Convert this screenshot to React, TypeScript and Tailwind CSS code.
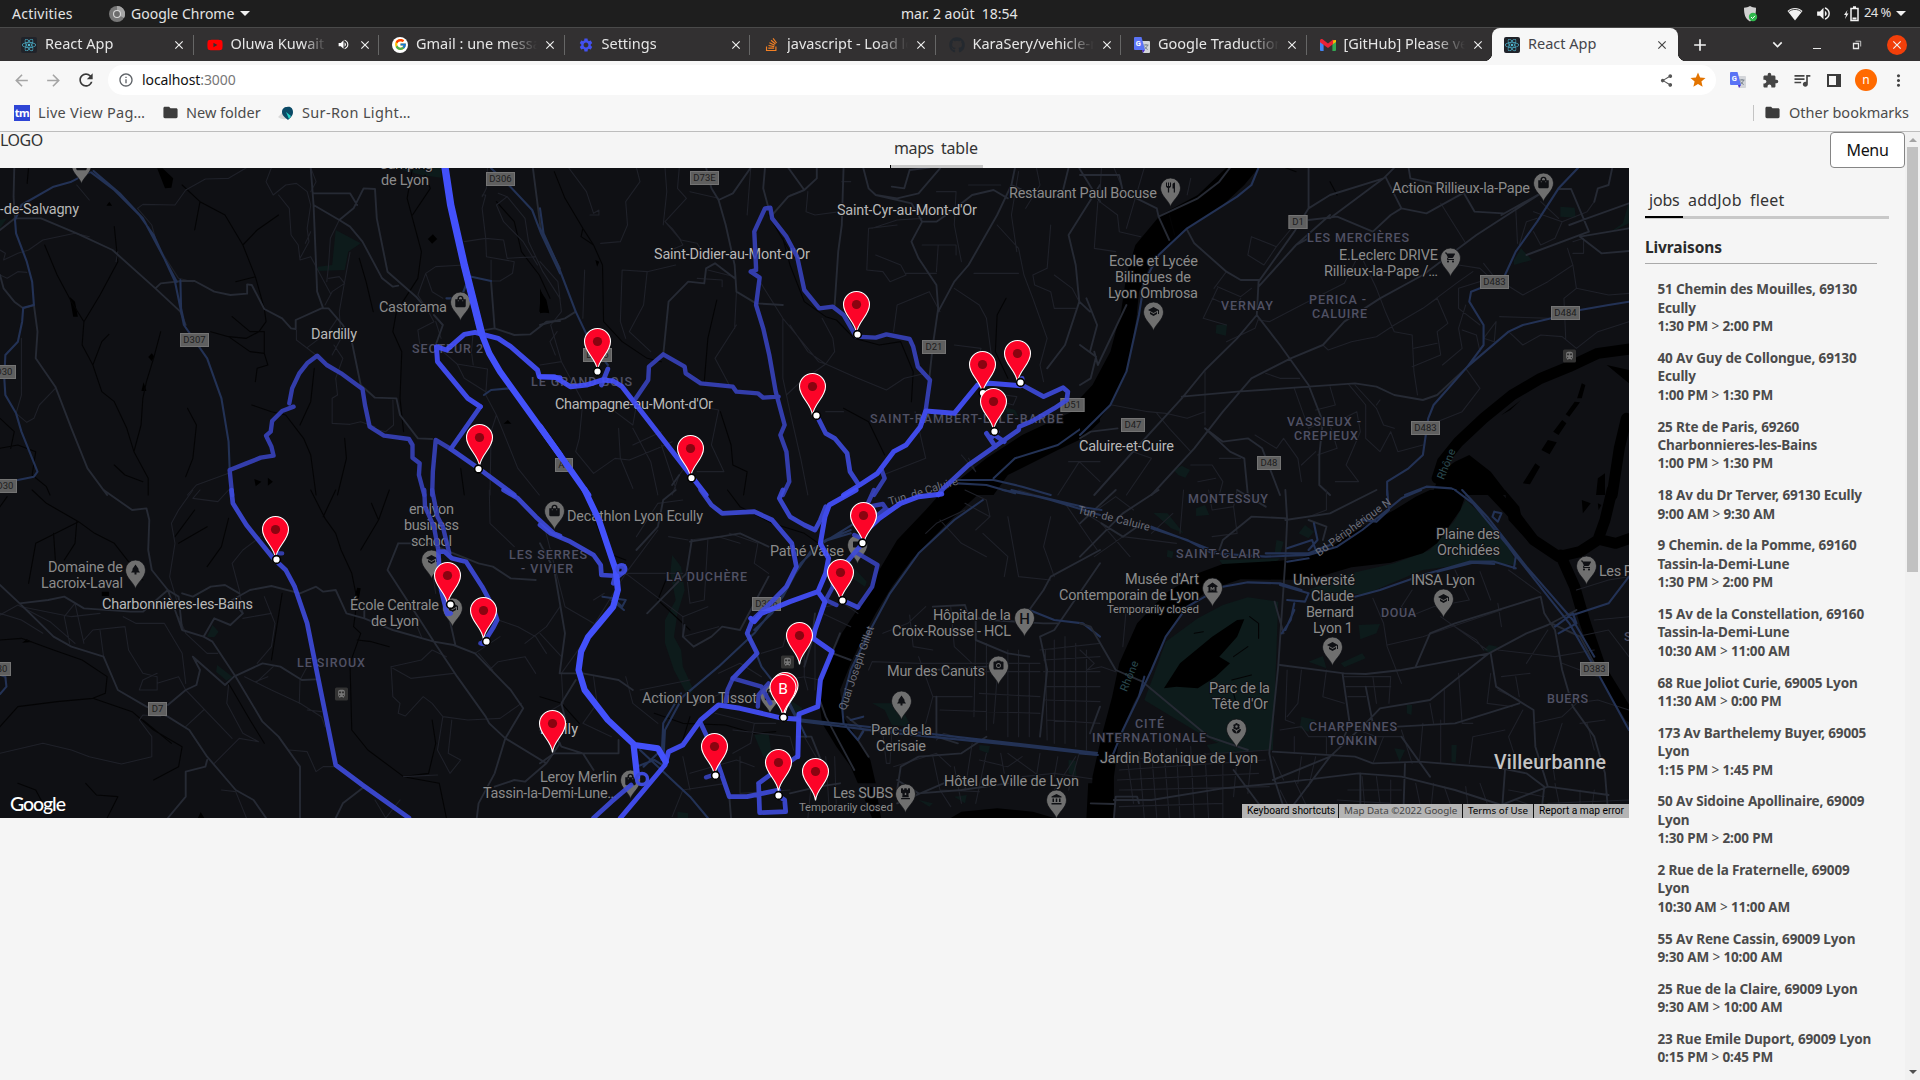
import React from "react";
import {
  MdArrowBack, MdArrowForward, MdRefresh, MdInfoOutline, MdShare, MdStar, MdExtension, MdQueueMusic,
  MdMoreVert, MdFolder, MdSettings, MdVolumeUp, MdClose, MdAdd, MdKeyboardArrowDown, MdShoppingCart,
  MdSchool, MdRestaurant, MdPark, MdVideocam, MdPhotoCamera, MdAccountBalance, MdLocalFlorist,
  MdTrain, MdMuseum,
} from "react-icons/md";
import { FaReact, FaYoutube, FaStackOverflow, FaGithub, FaChessRook, FaShoppingBag } from "react-icons/fa";
import { FcGoogle } from "react-icons/fc";

/* ---------- Map geometry: six tiles, each drawn in its own 1568x990 grid ---------- */

type Tile = {
  x: number;
  y: number;
  park?: string;
  water?: string;
  stream?: string;
  band?: string;
  minor: string;
  major: string;
  highway?: string;
  dim?: string;
  mid?: string;
  bright?: string;
  thick?: string;
};

const tiles: Tile[] = [
  {
    x: 0,
    y: 165,
    park: "M940,195 1010,235 975,260 965,315 890,318 890,305 930,300Z M1100,8 1235,8 1235,38 1180,30Z M0,165 20,160 0,190Z",
    water:
      "M440,10 455,10 485,40 480,68 462,70Z M195,395 210,410 218,455 205,455Z M1212,208 1224,222 1210,236 1198,222Z M1515,380 1530,405 1538,445 1510,440Z M425,565 432,575 425,588 415,576Z M402,652 410,678 396,678Z M306,110 314,122 298,122Z M1422,765 1432,776 1410,776Z M712,942 732,950 716,964Z M750,938 764,950 750,962Z",
    stream:
      "M80,8 76,55 M510,60 560,110 630,150 680,240 715,335 740,430 745,470 725,500 690,520 640,515 590,500 M560,110 545,195 M780,150 720,195 680,240 M125,240 160,330 200,410 235,470 230,540 260,600 285,680 320,710 355,790 375,860 415,940 415,990 M235,470 280,390 330,290 320,185 M260,600 285,530 305,508 M450,500 430,580 410,650 400,700 M400,700 395,780 375,860 M525,730 550,780 540,880 520,935 M0,850 50,840 100,860 90,930 130,965 140,990 M320,900 350,930 400,950 M1155,8 1140,100 1155,160 1180,260 1170,340 1110,440 1100,500 1125,560 1120,700 1130,800 M1155,150 1205,70 1190,30 M1390,110 1440,170 1460,260 1510,330 1540,400 M1006,280 1025,350 1045,440 M650,455 700,500 740,500 740,565 700,560 640,515 M880,610 870,710 840,780 M0,760 40,800 30,850 M965,820 970,880 945,990 M1290,910 1300,990 M705,720 760,740 800,750 850,820 870,870 885,990 M740,565 750,600 720,610 715,650 M660,350 715,335",
    minor:
      "M690,8 640,40 575,42 520,75 490,120 400,118 385,130 M215,60 250,105 M385,130 425,180 440,240 500,340 540,350 M760,8 745,50 765,90 800,60 830,55 860,80 870,120 860,190 865,230 840,280 M780,90 810,130 815,210 835,240 840,285 870,275 M950,165 925,220 920,300 915,350 M920,340 950,335 965,355 930,380 910,420 M980,262 965,350 950,440 955,520 930,570 M870,275 925,385 M935,540 960,580 940,640 945,690 930,700 930,775 980,778 1010,770 1050,785 M1350,90 1360,90 1350,130 1360,220 1300,230 M1360,220 1410,225 1420,280 1500,275 M1365,8 1362,70 1350,95 M1360,220 1362,275 1440,290 1435,325 1400,348 1375,348 1375,285 M1395,85 1420,95 1470,160 1480,230 1520,320 1568,400 M1420,95 1390,120 1410,170 1465,230 1505,300 M1300,300 1220,305 1192,325 1210,380 1240,400 M1192,325 1170,390 1200,440 1215,470 1170,495 1175,535 1220,540 M1220,470 1235,520 M1240,560 1280,597 1365,612 1360,690 M1280,597 1300,640 1360,680 M1325,500 1320,560 1325,600 M1360,690 1390,750 1375,800 1372,990 M1390,750 1420,830 1450,910 1510,990 M1560,500 1540,530 1555,570 M0,255 15,265 10,285 50,265 80,255 120,225 210,205 250,215 M330,260 325,290 M0,330 20,340 50,320 75,322 M60,520 60,690 45,745 75,772 95,760 110,720 155,670 M830,495 830,525 885,570 M860,548 920,500 945,460 M855,235 870,200 M1100,705 1102,780 1080,800 1040,790 M525,990 550,960 640,925 M870,8 885,50 870,80",
    major:
      "M40,8 38,95 42,160 0,195 M40,160 115,160 215,205 315,255 435,370 505,440 520,480 M435,370 450,355 510,348 545,348 600,380 645,390 692,386 692,358 705,360 740,432 790,460 815,490 828,492 828,465 900,430 920,430 960,480 985,530 1010,660 1050,698 1110,700 1120,750 1170,820 1210,822 M870,8 878,120 885,300 888,380 905,430 M878,120 950,165 980,185 1015,230 1070,340 1100,365 1115,362 M950,165 990,130 1018,70 1050,72 1055,160 1085,320 1165,395 1200,440 M878,85 980,85 1000,120 M0,330 10,370 40,410 65,430 95,420 105,500 100,580 155,665 200,790 245,910 300,990 M1375,350 1385,490 1440,510 1485,508 1530,470 1568,468 M1492,8 1515,200 1568,310 M1220,540 1240,480 1215,450 M1300,505 1385,490",
    highway:
      "M250,22 200,50 150,65 60,120 42,165 45,205 75,290 90,350 95,420 65,428 62,470 50,530 15,570 12,640 15,690 45,745 60,800 105,920 95,935 50,945 M255,22 320,75 390,150 430,210 490,350 515,480 580,580 620,700 640,830 643,910 M505,345 507,430 517,480 M262,18 335,85 400,160 440,240 495,350 M1375,10 1420,55 1490,135 1515,205 1568,325 M1320,335 1375,348 M1305,360 1290,400 1250,400 M1355,690 1375,675 1425,670",
    dim:
      "M650,990 643,915 690,895 730,878 766,872 760,845 745,812 758,800 762,768 790,738 822,725 M810,715 818,670 838,625 860,595 888,572 915,600 955,625 1015,672 1022,720 1035,785 1075,812 1145,822 1155,840 1155,878 1175,895 1173,930 1188,990 M1210,990 1212,920 1220,825 1262,852",
    mid: "M1262,852 1340,910 1440,990 M1262,852 1345,725",
    bright: "M1345,725 1310,700 1225,590 1222,545 1250,555 1300,508 1330,502 1395,520 1430,545 1505,615 1510,635 1568,638",
    thick: "M1300,300 1348,505 1370,565 1400,620 1568,870",
  },
  {
    x: 540,
    y: 165,
    park: "M1300,725 1330,735 1340,755 1310,748Z",
    water: "M0,370 25,440 0,445Z M155,285 166,290 160,305Z M1568,640 1530,720 1440,765 1350,810 1250,880 1120,990 1270,990 1310,930 1450,855 1520,820 1568,770Z",
    stream:
      "M40,20 70,100 120,190 150,240 175,300 178,470 230,530 300,580 340,590 M495,405 470,520 460,650 M680,220 700,300 740,410 800,455 830,465 880,520 950,540 1010,530 1045,620 1040,710 M505,740 535,840 540,900 580,920 570,990 M850,730 920,770 965,870 M1305,400 1280,450 1275,560 1310,640 M640,150 700,260 M120,190 115,215 150,240",
    minor:
      "M80,8 130,80 150,145 165,135 165,150 140,150 M270,8 280,50 240,110 245,180 225,230 170,235 M350,8 355,80 345,180 M390,8 385,70 410,100 350,170 390,220 400,240 M350,170 370,190 395,225 440,235 460,270 M400,240 345,265 M420,80 500,100 M590,8 580,150 M230,315 300,320 380,300 M230,315 225,470 240,520 M300,320 290,420 250,500 310,560 M125,315 120,460 M0,290 50,350 60,440 30,480 60,590 110,690 120,710 110,820 100,860 150,925 210,880 250,885 330,850 370,830 M60,590 0,600 M220,790 225,880 260,970 M260,790 310,890 330,990 M210,740 260,780 270,720 M340,840 380,970 M260,840 340,800 M430,720 500,735 480,840 515,920 440,920 M370,990 390,930 410,900 M440,340 510,345 510,365 M545,335 470,315 M610,340 680,460 780,590 800,597 M680,460 680,640 700,740 730,880 750,990 M800,597 730,650 690,690 M800,597 750,560 700,480 M800,597 825,560 820,520 790,460 M800,597 880,635 970,675 1020,640 1080,625 M550,480 490,580 530,660 M550,380 545,490 M700,90 730,80 M845,50 870,50 M750,80 745,140 770,150 840,140 M1000,180 920,190 915,315 960,320 980,350 1025,330 1010,300 940,270 M930,190 1000,165 1070,160 M1070,240 1165,240 1165,270 M1115,240 1110,320 M1025,325 1110,325 M1110,80 1165,80 1160,180 1180,290 M1215,325 1340,325 M1120,440 1090,380 1000,420 990,500 M1160,370 1230,420 1250,460 1265,580 M1280,180 1340,250 1355,330 1380,400 1420,520 1400,600 1410,650 M1340,20 1320,150 1335,260 M1390,8 1400,60 1360,130 M1200,60 1290,60 M1160,540 1235,550 1220,600 M1380,330 1385,360 1430,380 1440,430 1500,430 M1430,180 1420,310 1380,330 M1440,330 1490,370 1510,410 M1300,690 1335,695 1325,720 1260,700 M1180,870 1220,920 1200,880 M1480,890 1568,890 M1450,990 1510,890 1568,950 M1050,740 1080,880 960,930 M800,740 850,740",
    major:
      "M465,8 480,70 500,105 520,180 545,300 550,380 605,415 680,420 M590,8 540,85 500,105 M630,8 625,70 640,130 M695,8 740,75 775,40 775,8 M850,8 845,180 835,260 825,420 M740,75 695,95 650,150 M905,8 920,70 940,90 1040,115 1070,170 1040,230 1060,280 1110,360 1115,430 1100,540 1090,640 M940,90 1000,100 1060,85 1120,10 M985,65 1020,70 1035,15 1090,8 M1070,170 1110,170 1150,140 1210,90 1270,75 1310,100 M1330,8 1320,60 1280,150 1200,300 1160,350 1115,440 M0,480 70,460 100,440 M545,340 490,295 465,310 460,355 415,350 360,410 345,570 M1568,60 1480,210 1500,300 1510,410 1540,440 M1510,410 1470,540 1420,610 M1540,560 1560,480 1530,400 M1480,8 1460,95 1390,95 1320,60 M1510,10 1568,110 M370,960 390,930",
    highway:
      "M0,130 10,205 50,300 100,440 140,530 190,600 M0,190 20,235 M1270,940 1330,880 1450,840 1568,750 M1170,945 1270,945 1350,965 1430,990 M1170,955 1250,960 1330,985",
    dim:
      "M265,705 303,645 305,605 345,568 405,605 408,625 450,655 540,665 550,680 610,685 625,698 668,695 M590,320 615,338 605,420 625,490 642,570 660,680 685,780 673,810 690,860 698,950 680,990 M605,315 590,320 M605,310 600,200 630,130 645,128 650,160 690,215 720,275 740,375 782,430 820,425 850,450 885,515 940,518 970,508 1035,522 1045,545 1058,605 1092,645 1080,735 M955,910 965,940 935,990",
    mid: "M172,660 190,612 M775,752 800,805 825,820 860,865 868,920 893,960 M1250,805 1275,845 M1270,808 1300,830 M1115,990 1130,970 1200,900 1340,795 1342,785 1375,770 1440,730 1475,705 1478,680 1465,668 1410,695 1350,660 1350,640 M1262,820 1280,800",
    bright: "M0,635 40,635 85,665 130,660 175,645 205,648 230,665 465,990 M850,990 895,960 945,925 990,860 1025,840 1065,785 1080,738 1160,745 1225,660 1260,655 1345,662",
    thick: "M0,785 135,990",
  },
  {
    x: 1080,
    y: 165,
    park: "M1345,125 1385,128 1388,158 1345,155Z M1537,110 1537,175 1480,205 1520,175Z M1215,285 1235,250 1265,285 1215,300Z M382,480 412,478 408,512 380,505Z M262,915 285,902 308,915 295,938 275,930Z",
    water:
      "M410,8 330,90 225,150 155,240 130,330 115,440 85,560 35,660 0,700 0,810 45,775 90,715 130,625 158,460 165,380 200,290 300,190 400,120 460,60 500,8Z M1405,655 1415,660 1405,700 1392,700Z M1385,710 1400,712 1370,755 1360,748Z M1350,765 1362,775 1340,810 1325,800Z M1310,825 1335,832 1315,868 1292,855Z M1275,895 1288,905 1260,958 1240,955Z M985,990 1010,920 1050,890 1090,870 1150,920 1200,990Z M1475,600 1537,615 1537,655Z M1450,940 1470,925 1470,990 1445,990Z M1180,750 1235,705 1205,735Z",
    band: "M1540,552 1450,565 1370,605 1290,640 1210,690 1130,760 1060,830 1015,890 1000,940 M1530,760 1510,850 1490,990",
    stream: "M575,8 605,20 M250,150 265,210 M700,50 720,90",
    minor:
      "M60,8 55,110 105,150 110,200 170,215 M50,110 40,250 100,260 M310,40 300,90 M480,215 550,245 515,300 470,270 480,215 M550,245 600,180 M385,365 450,395 480,370 M370,400 430,430 450,400 M385,370 345,460 410,480 M410,320 375,370 M410,530 490,490 500,460 M500,465 530,470 620,420 740,355 780,270 M1010,115 1080,235 M790,280 830,370 855,440 880,500 930,510 935,620 945,690 M680,540 695,555 760,530 830,515 880,480 960,430 1060,350 1100,320 M1000,400 1030,475 1000,500 1010,570 930,605 M935,550 1000,535 M1060,300 1120,310 1150,340 1060,370 1060,430 1120,480 M1080,420 1060,490 1070,550 1015,600 M1070,495 1110,510 1120,560 M1165,470 1130,520 1160,530 1165,470 M1180,350 1240,390 1310,350 1380,300 1365,250 M1380,300 1390,370 1355,400 1360,520 M1390,370 1480,390 1537,385 M1175,455 1320,460 M1200,500 1240,540 1290,510 1350,515 1390,550 1450,500 1537,470 M1220,130 1225,235 M1080,610 1120,670 1070,740 1000,770 M840,705 830,720 M600,670 640,790 680,770 M700,665 715,720 660,735 M350,620 350,780 M520,625 560,640 615,640 M750,655 800,720 800,820 840,860 870,800 890,860 960,840 M665,870 720,850 700,780 775,740 785,800 745,900 780,950 715,950 M620,900 660,860 M490,810 550,850 570,820 610,880 620,950 M770,660 830,730 850,780 880,790 M390,880 450,880 M190,740 240,745 300,760 350,740 M215,745 250,790 310,860 M90,720 190,740 M120,850 200,880 130,990 M310,900 370,900 400,950 390,990 M330,950 380,940 M1000,400 960,430 M1230,240 1250,170 1280,160 M1270,140 1350,170 1330,220 1290,240 1270,200 M1350,170 1420,140 1440,110 M1290,110 1340,160 M1380,230 1410,220 1410,265 1380,265 M1130,295 1170,350 M180,8 130,190 M95,8 115,60",
    major:
      "M220,155 330,100 390,50 420,8 M220,155 250,225 M220,155 215,130 120,80 110,30 0,30 M0,540 45,575 30,640 0,660 M300,195 320,235 410,320 450,345 500,345 M40,560 50,600 130,420 M640,8 640,130 600,200 500,350 495,450 440,520 350,615 285,700 140,870 40,990 M640,130 700,90 850,40 880,8 M855,35 900,130 970,145 1080,80 M900,130 870,150 820,200 720,155 640,165 M700,150 605,240 500,365 M850,40 700,160 M640,220 605,240 M1075,85 1105,140 1185,145 M1290,85 1110,210 960,330 840,400 740,470 680,540 590,580 480,640 400,740 320,850 200,990 M495,450 560,540 640,660 680,770 670,870 670,960 700,990 M285,695 440,680 640,665 770,655 830,665 880,690 960,705 1000,690 1085,605 M1180,150 1290,85 M1340,72 1375,72 1390,110 1425,200 1250,270 M1537,115 1420,160 1370,180 M1400,215 1460,265 1537,258 M1440,110 1450,70 1480,60 1490,10 M1537,190 1400,215 M0,820 30,800 105,790 M350,790 400,830 470,820 510,850 560,990 M350,790 420,860 460,880 470,990 M920,8 925,40 1010,60 1080,60",
    highway:
      "M500,8 480,60 440,95 300,190 220,270 180,350 165,450 130,620 85,720 0,810 M1395,8 1340,70 1280,170 1220,260 1190,330 M1120,370 1095,380 1090,410 1130,480 1130,540 1085,605 990,720 975,760 960,870 920,910 860,950 860,990 M1085,605 1200,500 1240,480 1320,460 M1400,435 1480,420 1537,410 M910,990 970,965 1040,970 1080,990",
  },
  {
    x: 0,
    y: 490,
    park: "M595,405 612,425 600,442 580,440Z M608,525 650,560 635,572 605,545Z",
    water: "M285,305 305,305 305,318 285,318Z M75,448 90,456 62,458Z M1000,293 1010,295 1005,325 992,325Z M562,966 572,984 554,984Z",
    stream:
      "M0,50 20,20 M90,0 130,40 220,95 265,130 320,160 400,270 M220,95 100,160 80,280 M150,130 155,210 M215,95 210,160 180,210 M490,140 545,60 M500,160 580,110 M0,450 60,445 150,480 230,510 300,560 295,610 260,625 160,635 50,650 0,710 M260,625 370,665 430,720 510,770 500,830 430,870 M870,0 910,85 940,130 955,180 985,250 1000,330 990,410 1010,430 980,520 985,720 1030,780 1130,860 1230,880 1250,984 M940,0 905,80 M1090,0 1060,90 1010,180 M1060,90 1040,40 M790,310 760,510 M1000,450 1040,455 1090,470 M1210,690 1220,760 1200,850 1130,860 M640,580 700,690 740,760 M400,690 480,760 M640,85 620,170 580,230 M240,880 270,915 330,920 300,984 M50,880 100,900 130,960",
    minor:
      "M560,0 540,25 610,35 640,0 M540,0 500,60 480,100 490,160 475,260 500,350 M730,140 680,180 650,220 670,300 680,370 M0,370 60,390 120,430 M0,375 50,345 M50,345 140,395 210,460 M60,350 200,380 280,370 M210,340 180,380 195,460 M210,340 235,460 M235,450 260,420 350,410 360,480 400,550 440,560 440,600 390,600 400,570 440,550 M290,500 280,420 M440,580 500,560 520,600 M345,380 380,400 460,400 510,490 520,580 M500,380 520,430 580,490 610,490 M740,320 770,400 760,470 720,520 M680,385 760,370 M685,560 760,600 840,640 900,680 910,710 M720,575 765,530 M715,575 750,560 M840,570 838,640 M860,660 900,665 M640,585 635,640 680,730 724,755 670,745 600,820 M520,600 650,745 M570,660 520,710 M0,790 120,760 200,780 250,800 340,822 425,800 425,740 390,690 400,675 450,680 M1095,530 1180,510 1210,480 1250,500 M1095,530 1100,620 1120,640 1115,670 1135,678 1185,620 1210,640 1240,680 1310,690 1400,685 1460,640 M1100,535 1150,565 1270,550 M1240,680 1225,780 1250,830 1260,850 1290,810 1255,790 1265,690 M1130,860 1225,855 M1370,540 1395,515 1470,500 1500,550 M1400,440 1330,490 M1395,390 1450,410 1500,440 1530,490 M1470,460 1530,410 1568,350 M1370,0 1372,100 1440,170 M1210,240 1220,310 M810,780 860,785 885,845 905,830 935,830 M1380,540 1340,490 M870,510 840,570 M620,900 660,905 690,984 M1180,440 1160,390 M1050,930 1080,984 1120,930",
    major:
      "M290,0 370,60 410,55 418,90 415,180 425,240 470,300 510,420 570,440 595,455 660,560 735,695 780,740 840,830 840,984 M0,285 55,340 135,330 180,320 235,355 365,365 400,365 470,300 M55,340 150,440 200,470 290,500 330,600 410,650 470,680 530,720 580,800 660,900 710,930 745,984 M570,440 600,385 645,405 680,370 650,330 700,300 760,288 840,310 885,290 905,305 940,300 970,370 1020,385 1020,350 M510,310 540,320 590,290 630,285 670,310 M470,300 500,320 510,420 M655,560 735,520 785,530 845,570 885,568 M470,645 520,600 550,585 560,540 540,500 630,585 655,560 M580,810 575,830 520,845 520,920 470,984 M1020,385 1100,420 1215,455 1270,465 1330,490 1430,600 1465,655 1415,745 1385,850 1340,940 1335,984 M1115,160 1200,160 1340,220 1380,230 1430,265 1500,270 M1115,160 1085,240 1170,380 1215,455 1280,560 1360,680 1370,700 1415,745 1530,820 1568,760 M1255,370 1275,465 M1530,820 1470,875 1440,870 1385,890 M1020,890 960,940 940,984",
    highway: "M0,555 15,560 18,590 0,612",
    dim: "M1188,0 1190,50 1215,110 1228,185 M1210,0 1225,80 1240,110 1258,190 M1345,460 1355,462 M775,190 790,190",
    mid: "M648,0 652,40 690,105 735,165 765,205 800,240 825,290 860,400 890,560 940,825 1015,885 1145,984 M1228,185 1228,205 1235,300 1252,372 1262,370 M1228,185 1245,185 1265,205 1305,215 1350,290 1380,350 1392,390 1380,415 1365,440 1350,460 M1410,0 1450,25 1500,80 1550,130 1568,138",
  },
  {
    x: 540,
    y: 490,
    park: "M370,195 395,230 405,300 385,370 375,440 395,480 400,530 430,600 415,620 375,540 350,460 350,390 380,330 365,250Z M930,640 1005,640 1040,710 985,705 965,660Z M600,735 640,730 650,800 625,800Z M1230,765 1260,768 1255,790 1230,780Z M1480,810 1500,812 1502,862 1480,850Z M880,235 915,275 910,290 875,265Z M700,630 735,655 720,680Z M1060,930 1100,940 1090,950Z M1160,920 1195,915 1190,940Z M385,965 415,970 415,984 385,984Z",
    water:
      "M1130,0 1240,0 1130,110 1040,210 985,290 940,370 910,430 870,520 840,600 850,680 885,740 925,810 940,880 890,880 870,830 830,770 790,700 780,620 800,540 845,430 900,340 950,240 1000,150 1080,60Z M895,890 940,890 955,984 1150,984 1180,965 1280,955 1380,965 1440,984 930,984Z M1535,880 1568,880 1568,984 1530,984Z",
    stream:
      "M525,0 560,50 650,100 740,130 780,160 M360,250 330,330 420,420 M150,80 190,190 240,210 M320,670 400,700 520,705 600,730 660,725 M420,680 400,750 M0,620 60,640 110,700",
    minor:
      "M270,140 330,40 400,30 M330,120 240,250 120,460 60,550 M245,250 400,250 M360,140 415,150 M240,250 400,380 470,350 M400,380 400,440 500,410 M420,150 500,140 560,160 M470,150 460,330 420,340 410,250 M530,130 610,160 600,220 640,250 M0,430 60,500 M10,100 70,350 150,400 M60,550 65,640 0,680 M150,560 160,640 120,700 200,740 M240,560 260,640 330,700 M180,310 150,330 M280,600 420,570 M620,490 680,470 690,430 M740,560 780,570 M790,370 870,410 M800,350 850,340 890,370 M770,460 770,600 M740,480 740,560 M500,550 560,520 620,560 M440,640 510,610 M640,580 740,560 750,600 M490,670 600,700 660,700 M540,720 700,740 710,780 M370,980 400,900 520,880 M420,850 550,810 600,830 M400,800 420,900 M560,800 560,910 M800,800 810,960 830,960 825,800 M740,740 800,850 M760,880 750,984 M960,730 970,820 980,820 985,730 M990,830 1110,790 1150,830 M1035,375 1045,470 1100,480 M920,540 930,515 1060,520 1240,520 M960,430 1030,400 1080,350 M1150,350 1160,470 1210,520 M1220,440 1215,680 M1220,520 1400,520 M1210,545 1400,545 M1100,620 1210,620 M1230,610 1400,620 M1120,660 1400,670 M1250,460 1250,720 M1280,560 1270,700 M1310,480 1310,740 M1340,480 1340,740 M1370,520 1370,740 M1060,500 1100,620 1080,700 M1415,480 1420,750 M1440,450 1440,760 M1470,440 1470,760 M1500,460 1500,770 M1530,480 1530,780 M1400,480 1568,460 M1410,510 1568,500 M1410,545 1568,545 M1415,590 1568,590 M1415,630 1568,635 M1420,690 1568,700 M1080,130 1110,100 1190,60 M1120,90 1180,160 1250,200 M1190,40 1260,80 M1190,0 1250,30 1260,80 1220,120 M1310,80 1340,260 1430,270 M1240,130 1310,200 1300,260 M1430,80 1410,170 1440,260 M1340,0 1470,40 1560,180 M1100,800 1120,900 1150,950 M1160,830 1180,940 M1210,760 1190,900 M1250,790 1220,940 M1290,790 1300,850 M1130,870 1210,870 M1120,900 1230,905 M1310,790 1400,860 M1400,790 1390,860 M1450,800 1440,860 M1500,800 1440,900 M1510,790 1480,900 M1230,810 1310,830 1350,800 M1350,860 1440,850 1568,870 M1110,750 1130,730 1210,755 M560,910 700,900 M600,700 590,760 540,790",
    major:
      "M0,160 40,240 70,430 55,550 120,550 220,570 260,600 M270,180 330,110 345,30 380,0 M420,155 560,130 640,170 M425,150 410,250 300,370 M405,405 400,440 430,470 480,440 510,410 560,420 640,260 M220,750 220,790 120,790 60,770 40,730 M0,820 40,790 120,790 150,840 M100,570 60,640 80,730 M840,430 790,560 780,620 800,680 840,760 880,840 M770,370 760,460 740,530 M820,490 870,510 M860,680 905,720 890,750 920,800 M905,720 990,725 M1100,540 1250,530 M1100,350 1190,345 1200,380 M1200,380 1260,390 1410,400 1450,400 M1568,220 1440,420 1400,440 1420,540 1400,740 M1410,300 1430,260 1568,180 M1410,300 1370,360 M1220,360 1220,450 1310,490 1370,500 M1000,900 1010,830 1060,800 1180,790 1250,740 M1000,870 1060,910 1180,900 1310,880 M1000,940 1130,880 M1110,620 1110,740 1170,760 M700,910 780,890 840,880 M720,740 760,740 790,820 780,890 M530,920 535,984 M0,720 60,730 M1540,730 1568,650",
    highway:
      "M790,155 870,130 M880,100 760,180 715,250 650,370 600,420 M345,820 350,720 400,620 500,530 600,430 680,320 730,220 800,150 870,120 M340,810 345,700 395,610 M870,690 905,680 M700,690 1000,730 1280,760 1568,795 M700,685 1000,720 1568,790 M1240,30 1160,90 1060,190 980,310 920,430 870,540 845,640 850,700 890,750 905,725 M1295,0 1400,20 1520,50 M1320,0 1430,30 1568,75 M580,420 620,530 700,640 745,740 M690,630 720,690 M280,780 340,840 420,920 470,984 M175,320 240,330 230,350 210,330 M200,330 235,360 M1370,360 1440,390 1520,400 1568,440 M270,830 320,810 350,830 M330,790 290,830",
    dim:
      "M890,190 945,225 930,290 890,352 M820,290 800,330 830,345 M820,285 858,225 M540,565 620,590 645,640 M610,650 612,615 640,580 M520,635 525,600 540,565 M935,0 918,40 M920,50 960,42 968,55 935,85 M945,80 975,60 M880,135 900,145 M465,862 485,855",
    mid: "M450,0 480,45 510,70 600,65 650,90 705,160 718,230 690,290 640,345 595,390 580,430 608,490 540,565 M680,0 670,25 700,80 740,105 770,120 785,90 800,50 M860,215 895,170 905,150 M450,700 485,780 530,920 580,920 668,900 M612,880 615,968 688,965 685,930 668,918 M612,880 650,850 720,800 M0,105 30,130 85,155 150,195 170,225 172,255 220,258 235,245 235,228 218,230 205,280 M150,984 200,935 255,885 M845,330 890,352",
    bright:
      "M885,0 810,45 798,80 785,160 800,190 808,205 800,250 778,305 700,335 620,370 600,395 590,385 M778,305 798,335 770,420 765,445 818,485 785,570 778,650 725,672 722,800 M905,130 950,85 1010,40 1060,20 1125,12 M722,687 680,685 560,655 500,645 450,690 400,765 360,785 350,825 225,984",
    thick: "M125,0 165,90 212,240 218,300 205,350 170,395 135,440 115,485 108,540 125,600 190,690 265,765 330,775 352,815 M262,765 272,860",
  },
  {
    x: 1080,
    y: 490,
    park: "M240,455 330,385 400,345 470,322 555,335 540,780 440,785 350,740 180,630 205,560Z M1080,30 1180,130 1225,225 1110,218 960,240 800,312 690,312 640,300 760,250 880,220 980,180 1050,90Z M205,68 245,70 290,130 255,115Z M325,55 350,45 362,75 325,78Z M612,130 630,105 655,125 640,145Z M550,150 570,155 560,195 545,190Z M390,210 560,205 540,225 400,225Z M780,405 840,402 830,430 785,448Z M640,515 680,498 690,535Z M730,520 790,490 800,505 740,532Z M1145,465 1170,470 1150,490 1130,480Z M620,680 660,690 640,725 615,715Z M880,775 910,780 895,815Z M1040,765 1055,765 1052,818 1040,815Z M915,645 930,645 928,675 915,670Z M355,765 400,755 440,790 370,790Z M245,180 262,185 258,205 243,200Z",
    water:
      "M30,984 35,860 60,740 90,620 110,520 160,400 240,310 330,250 400,222 560,212 620,205 690,180 760,130 880,60 940,20 980,0 1085,0 1065,60 1000,160 960,190 870,218 760,232 640,270 450,268 360,300 300,350 240,440 200,540 150,640 110,740 95,860 95,984Z M235,595 280,520 370,440 440,390 460,388 440,440 390,500 420,520 380,560 330,595 270,590Z M1190,0 1230,50 1240,100 1290,160 1260,160 1200,90Z M1405,30 1430,40 1408,70Z M1450,40 1460,45 1452,60Z",
    band: "M1150,0 1220,80 1270,150 1340,200 1400,185 1450,150 1470,90 1490,0 M1345,195 1385,290 1415,400 1460,540 1540,680 M1460,150 1500,160 1540,145",
    stream: "M430,500 470,470 M475,380 500,400 500,445 M320,430 345,425 M425,570 480,555 M430,610 440,650",
    minor:
      "M20,80 100,20 150,60 M40,200 120,140 270,160 M0,60 60,100 140,200 M290,0 280,130 M200,130 260,70 M360,0 370,60 430,50 440,130 370,140 M690,0 690,60 640,80 M440,0 430,50 M0,480 40,520 20,540 60,530 100,545 M120,470 130,350 M820,325 850,400 860,470 900,580 M1050,240 1090,330 990,350 920,380 900,350 930,300 M860,465 960,440 1040,410 1180,360 M1140,480 1010,380 M1050,410 1110,450 1130,480 M580,540 575,690 600,700 M620,540 610,640 580,680 M690,540 680,620 740,640 M740,560 870,560 865,640 M820,560 830,640 M745,590 870,590 M750,620 800,620 M560,720 620,710 640,740 760,740 M600,740 600,790 M690,740 690,790 M780,720 830,740 900,740 M1060,550 1070,700 1100,700 M1020,600 1020,700 M1150,550 1140,640 1210,650 M1170,600 1230,630 M980,640 990,700 M1180,560 1260,550 M1220,560 1230,620 M1170,480 1330,500 M1310,420 1250,520 M1390,440 1480,420 1537,500 M1330,500 1440,480 M1350,520 1450,560 M1270,700 1350,680 1390,640 M1380,640 1450,630 1537,660 M1420,700 1440,780 M1350,700 1320,800 1330,870 M1240,660 1200,740 1230,840 M1190,720 1100,740 1090,820 M900,720 930,820 M960,700 950,820 M1010,690 1010,820 M850,740 820,820 M540,800 570,870 M620,800 610,880 M660,800 640,890 M790,860 800,984 M830,860 840,940 M870,870 870,984 M940,880 960,984 M990,880 980,984 M1020,890 1050,984 M1080,890 1090,984 M1120,880 1140,940 M750,900 900,900 M720,930 870,940 M1330,880 1350,984 M1400,900 1400,984 M1440,900 1430,984 M1310,940 1537,930 M1200,900 1300,920 M1220,930 1300,960 M560,900 600,984 M600,870 650,984 M110,810 530,780 M110,840 520,810 M105,870 500,850 M110,900 530,890 M110,950 400,940 M130,790 150,940 M165,785 180,984 M200,780 215,984 M235,780 250,984 M270,775 280,984 M310,770 320,984 M350,790 360,984 M400,800 400,984 M440,800 430,920 M480,800 470,910 M1400,700 1470,690 M1390,300 1480,270 1537,260 M1540,380 1440,390 M1200,240 1290,310 M1120,245 1150,330 M1170,340 1180,410",
    major:
      "M0,400 30,410 100,540 175,575 360,740 470,780 M0,200 120,70 220,0 M0,100 100,0 M575,0 580,90 575,210 555,530 530,790 545,870 580,984 M560,525 740,550 800,552 900,540 1000,520 1145,490 1250,430 1310,405 1390,360 M1145,490 980,630 840,655 800,700 700,800 570,984 M735,550 755,700 740,740 M940,530 980,430 1050,400 1290,320 M1290,320 1300,370 1330,420 1350,540 1380,650 1440,740 1470,850 1480,984 M1150,490 1165,590 1270,660 1275,770 1310,890 M540,785 770,800 820,820 950,815 1180,835 1250,850 1300,890 1290,984 M95,930 200,930 400,895 550,880 780,850 900,860 1050,900 1180,945 1310,890 1480,915 M785,850 785,984 M910,820 905,984 M1190,840 1180,984 M890,710 1050,700 1230,640 M900,740 980,860 M30,940 95,942 M165,940 160,920 100,920 95,984 M575,90 700,70 830,0 M580,85 480,80 400,150 390,180 M520,50 440,0 M640,90 690,110 680,150 M545,335 570,430 M430,840 530,984 M800,590 820,700 M1320,400 1400,440 1440,520 M700,800 540,870 M60,100 120,140 160,110",
    highway:
      "M0,50 60,60 M200,115 300,150 370,190 520,200 640,195 720,170 790,120 860,60 900,25 955,0 M200,110 310,155 380,185 M520,190 640,190 700,165 M860,0 865,60 830,95 790,90 M240,440 300,350 400,290 470,277 560,280 620,300 M770,320 840,300 960,255 1090,215 1160,215 1220,235 M1000,245 1100,218 1160,222 M1050,0 1100,40 1200,170 1370,400 1450,550 1537,720 M1070,0 1140,80 1250,230 1380,390 1440,500 M1380,375 1480,340 1537,260 M240,440 200,540 165,620 120,720 90,800 M165,620 180,560 M0,790 50,795 M580,175 650,150 660,180 700,165 M655,100 665,150 640,180 M1160,65 1180,70 1170,95 1155,80 1160,65 M1330,410 1380,370 1390,400 1340,430 M565,430 590,390 600,340 M575,420 600,360 M1215,235 1220,200 1200,170 M580,215 640,205 M580,330 630,335 640,310 560,285",
  },
];

/* ---------- Labels ---------- */

type Kind = "city" | "poi" | "area" | "small" | "big";
const labels: [string, number, number, number, Kind][] = [
  ["-de-Salvagny", 0, 79, 209.5, "city"],
  ["Camping", 379, 433, 164, "poi"], ["de Lyon", 381, 429, 180, "poi"],
  ["Castorama", 379, 447, 307, "poi"], ["Dardilly", 311, 357, 334, "city"],
  ["SECTEUR 2", 412, 483, 349, "area"], ["LE GRAND BOIS", 531, 632, 382, "area"],
  ["Saint-Cyr-au-Mont-d'Or", 837, 977, 210, "city"], ["Saint-Didier-au-Mont-d'Or", 654, 810, 254, "city"],
  ["Restaurant Paul Bocuse", 1009, 1157, 193, "poi"], ["Champagne-au-Mont-d'Or", 555, 713, 404, "city"],
  ["SAINT-RAMBERT-L'ÎLE-BARBE", 870, 1063, 419, "area"], ["Caluire-et-Cuire", 1079, 1174, 446, "city"],
  ["Action Rillieux-la-Pape", 1392, 1530, 188, "poi"], ["LES MERCIÈRES", 1307, 1409, 238, "area"],
  ["E.Leclerc DRIVE", 1339, 1438, 255, "poi"], ["Rillieux-la-Pape /…", 1324, 1438, 271, "poi"],
  ["Ecole et Lycée", 1109, 1198, 261, "poi"], ["Bilingues de", 1115, 1191, 277, "poi"], ["Lyon Ombrosa", 1108, 1198, 293, "poi"],
  ["VERNAY", 1221, 1273, 306, "area"], ["PERICA -", 1309, 1366, 300, "area"], ["CALUIRE", 1312, 1367, 314, "area"],
  ["VASSIEUX -", 1287, 1361, 422, "area"], ["CREPIEUX", 1294, 1358, 436, "area"], ["MONTESSUY", 1188, 1268, 499, "area"],
  ["Domaine de", 48, 123, 567, "poi"], ["Lacroix-Laval", 41, 123, 583, "poi"],
  ["Charbonnières-les-Bains", 102, 253, 604, "city"],
  ["emlyon", 409, 454, 509.5, "poi"], ["business", 404, 459, 525, "poi"], ["school", 411, 452, 541, "poi"],
  ["École Centrale", 350, 439, 605, "poi"], ["de Lyon", 371, 419, 621, "poi"],
  ["LE SIROUX", 297, 365, 663, "area"], ["LES SERRES", 509, 587, 555, "area"], ["- VIVIER", 521, 573, 569, "area"],
  ["Decathlon Lyon Ecully", 567, 703, 516, "poi"], ["LA DUCHÈRE", 666, 747, 577, "area"], ["Pathé Vaise", 770, 844, 551, "poi"],
  ["Hôpital de la", 933, 1011, 615, "poi"], ["Croix-Rousse - HCL", 892, 1011, 631, "poi"],
  ["Mur des Canuts", 887, 985, 671, "poi"], ["Action Lyon Tissot", 642, 757, 698, "poi"],
  ["Parc de la", 871, 932, 730, "poi"], ["Cerisaie", 876, 926, 746, "poi"], ["Écully", 540, 578, 729, "city"],
  ["Leroy Merlin", 540, 617, 777, "poi"], ["Tassin-la-Demi-Lune…", 483, 617, 793, "poi"],
  ["Les SUBS", 833, 893, 793, "poi"], ["Temporarily closed", 799, 893, 807, "small"],
  ["Hôtel de Ville de Lyon", 944, 1079, 781, "poi"],
  ["SAINT-CLAIR", 1176, 1260, 554, "area"], ["Musée d'Art", 1125, 1199, 579, "poi"],
  ["Contemporain de Lyon", 1059, 1199, 595, "poi"], ["Temporarily closed", 1107, 1199, 609, "small"],
  ["Université", 1293, 1355, 580, "poi"], ["Claude", 1311, 1354, 596, "poi"], ["Bernard", 1306, 1354, 612, "poi"], ["Lyon 1", 1313, 1353, 628, "poi"],
  ["DOUA", 1381, 1416, 613, "area"], ["INSA Lyon", 1411, 1475, 580, "poi"],
  ["Plaine des", 1436, 1500, 534, "poi"], ["Orchidées", 1437, 1500, 550, "poi"],
  ["Les P", 1599, 1633, 571, "poi"], ["S", 1624, 1632, 637, "area"],
  ["BUERS", 1547, 1588, 699, "area"], ["CHARPENNES", 1309, 1397, 727, "area"], ["TONKIN", 1328, 1377, 741, "area"],
  ["CITÉ", 1135, 1164, 724, "area"], ["INTERNATIONALE", 1092, 1206, 738, "area"],
  ["Parc de la", 1209, 1270, 688, "poi"], ["Tête d'Or", 1212, 1268, 704, "poi"],
  ["Jardin Botanique de Lyon", 1100, 1258, 758, "poi"], ["Villeurbanne", 1494, 1606, 762, "big"],
];

const labelStyle: Record<Kind, { size: number; fill: string; weight: number; drop: number }> = {
  city: { size: 14.5, fill: "#b8b8b8", weight: 400, drop: 5 },
  poi: { size: 14.5, fill: "#8b8b8b", weight: 400, drop: 5 },
  area: { size: 12.5, fill: "#505164", weight: 500, drop: 4.5 },
  small: { size: 11.5, fill: "#8b8b8b", weight: 400, drop: 4 },
  big: { size: 19.5, fill: "#c4c4c4", weight: 500, drop: 7 },
};

const slanted: [string, number, number, number, number, string][] = [
  ["Tun. de Caluire", 923, 491, -17, 72, "#6b6d78"],
  ["Tun. de Caluire", 1114, 518, 14, 74, "#6b6d78"],
  ["Quai Joseph Gillet", 856, 668, -71, 88, "#6b6d78"],
  ["Bd Périphérique N", 1353, 527, -36, 90, "#6b6d78"],
  ["Rhône", 1446, 464, -68, 32, "#2b4a50"],
  ["Rhône", 1129, 676, -68, 32, "#2b4a50"],
];

const shields: [string, number, number, number][] = [
  ["D306", 500.5, 179, 29], ["D307", 194.5, 340, 29], ["D30", 4, 372, 24], ["D30", 5, 486, 24], ["D30", -1, 669, 24],
  ["A6", 564, 465, 18], ["D73E", 704.5, 178, 29], ["D21", 934, 347, 24], ["D51", 1072.5, 405, 24], ["D306", 597.5, 355, 29],
  ["D1", 1298, 222, 19], ["D483", 1494.5, 282, 29], ["D484", 1565.5, 313, 29], ["D483", 1425.5, 428, 29], ["D47", 1133, 425, 24],
  ["D48", 1269, 463, 24], ["D7", 157.5, 709, 19], ["D306", 766.5, 604, 29], ["D383", 1594.5, 669, 29],
];

const places: [React.ComponentType<any> | string, number, number][] = [
  [FaShoppingBag, 81.5, 165], [FaShoppingBag, 460.5, 302], [MdRestaurant, 1170.5, 188], [FaShoppingBag, 1543.5, 183],
  [MdShoppingCart, 1450.5, 258], [MdSchool, 1153.5, 312], [MdPark, 135.5, 570], [MdSchool, 431.5, 560],
  [MdSchool, 452.5, 608], [FaShoppingBag, 554.5, 511], [MdVideocam, 857.5, 545], [FaShoppingBag, 770, 695],
  ["H", 1024.5, 618], [MdPhotoCamera, 998.5, 666], [MdPark, 901.5, 701], [FaShoppingBag, 630.5, 780],
  [FaChessRook, 905.5, 794], [MdAccountBalance, 1056.5, 800], [MdMuseum, 1212.5, 588], [MdSchool, 1332.5, 647],
  [MdSchool, 1443.5, 599], [MdShoppingCart, 1586.5, 566], [MdLocalFlorist, 1236.5, 729],
];

const stations: [number, number][] = [[1569.5, 356], [341.5, 694], [787.5, 662]];

const stops: [number, number][] = [
  [478.5, 469], [597.5, 371.5], [691.5, 478], [857.5, 334.5], [816.5, 415.5], [983, 393], [1020.5, 382.5],
  [276.5, 559.5], [450.5, 604.5], [486.5, 641.5], [862.5, 543], [842.5, 600.5], [715.5, 775.5], [778.5, 795.5],
  [783.5, 717.5], [994.5, 431.5],
];

const markers: [number, number, boolean?][] = [
  [856.5, 305], [597.5, 342], [1017.5, 354], [982.5, 365], [812.5, 387], [479.5, 438], [690.5, 449],
  [863.5, 516], [275.5, 530], [840.5, 573], [447.5, 576], [483.5, 611], [799.5, 636], [785, 686], [783, 688, true],
  [552.5, 724], [714.5, 747], [778.5, 763], [815.5, 772],
];

function Strokes({ d, color, width }: { d?: string; color: string; width: number }) {
  if (!d) return null;
  return <path d={d} fill="none" stroke={color} strokeWidth={width} strokeLinejoin="round" strokeLinecap="round" vectorEffect="non-scaling-stroke" />;
}

function Marker({ x, y, letter }: { x: number; y: number; letter?: string }) {
  return (
    <g transform={`translate(${x} ${y - 0.5})`}>
      <path d="M0,29 C-1,17 -13,11 -13,0 A13,13 0 1 1 13,0 C13,11 1,17 0,29Z" fill="#fc0428" stroke="#fff" strokeWidth="1.1" />
      {letter ? (
        <text y="6" textAnchor="middle" fontSize="15.5" fill="#fff">{letter}</text>
      ) : (
        <circle r="4.6" fill="#8a0410" />
      )}
    </g>
  );
}

const place = (t: Tile) => `translate(${t.x} ${t.y}) scale(${1 / 2.8} ${1 / 3})`;

function MapCanvas() {
  return (
    <svg className="block h-[650px] w-[1629px]" viewBox="0 168 1629 650" fontFamily="Roboto, sans-serif">
      <rect y="168" width="1629" height="650" fill="#0f1014" />
      {tiles.map((t, i) => (
        <g key={i} transform={place(t)}>
          <path d={t.park} fill="#0d1b1b" />
          <path d={t.water} fill="#000" />
          <Strokes d={t.band} color="#000" width={11} />
          <Strokes d={t.stream} color="#040405" width={1.1} />
          <Strokes d={t.minor} color="#1f2129" width={1.1} />
          <Strokes d={t.major} color="#262a34" width={1.9} />
          <Strokes d={t.highway} color="#233255" width={2.1} />
        </g>
      ))}
      {shields.map(([text, x, y, w], i) => (
        <g key={i}>
          <rect x={x - w / 2} y={y - 7} width={w} height="14" fill="#5f5f5f" />
          <rect x={x - w / 2 + 0.5} y={y - 6.5} width={w - 1} height="13" fill="none" stroke="#747474" />
          <text x={x} y={y + 3.4} textAnchor="middle" fontSize="9.5" fill="#1d1d1d">{text}</text>
        </g>
      ))}
      {stations.map(([x, y], i) => (
        <g key={i}>
          <rect x={x - 6.5} y={y - 6.5} width="13" height="13" rx="1.5" fill="#333" />
          <MdTrain x={x - 5} y={y - 5} size={10} color="#777" />
        </g>
      ))}
      {places.map(([Icon, x, y], i) => (
        <g key={i} transform={`translate(${x} ${y})`}>
          <path d="M0,19 C-1,13 -10,8 -10,0 A10,10 0 1 1 10,0 C10,8 1,13 0,19Z" fill="#6f6f6f" stroke="#0f1014" strokeWidth=".7" />
          {typeof Icon === "string" ? (
            <text y="5.5" textAnchor="middle" fontSize="15" fontWeight="500" fill="#0f1014">{Icon}</text>
          ) : (
            <Icon x={-6} y={-6.5} size={12} color="#0f1014" />
          )}
        </g>
      ))}
      {labels.map(([text, x1, x2, y, kind], i) => {
        const s = labelStyle[kind];
        return (
          <text key={i} x={x1} y={y + s.drop - 0.5} textLength={x2 - x1} fontSize={s.size} fontWeight={s.weight} fill={s.fill}
            stroke="#0f1014" strokeWidth="2" paintOrder="stroke" strokeLinejoin="round">
            {text}
          </text>
        );
      })}
      {slanted.map(([text, x, y, r, len, fill], i) => (
        <text key={i} transform={`translate(${x} ${y}) rotate(${r})`} y="4" textAnchor="middle" textLength={len} fontSize="11" fill={fill}>
          {text}
        </text>
      ))}
      {tiles.map((t, i) => (
        <g key={i} transform={place(t)} opacity=".9">
          <Strokes d={t.dim} color="#3742bc" width={4.4} />
          <Strokes d={t.mid} color="#3e4bdc" width={4.7} />
          <Strokes d={t.bright} color="#4551ff" width={5} />
        </g>
      ))}
      {tiles.map((t, i) => (
        <g key={i} transform={place(t)}>
          <Strokes d={t.thick} color="#4351fb" width={6.2} />
        </g>
      ))}
      <Strokes d="M444.5,164 450.7,205 464.3,265 481.4,333" color="#4351fb" width={7.4} />
      <circle cx="642" cy="779" r="5.5" fill="none" stroke="#3e4bdc" strokeWidth="3.5" />
      <circle cx="621.5" cy="569" r="4.5" fill="none" stroke="#3e4bdc" strokeWidth="3" />
      {markers.map(([x, y, lettered], i) => (
        <Marker key={i} x={x} y={y} letter={lettered ? "B" : undefined} />
      ))}
      {stops.map(([x, y], i) => (
        <g key={i}>
          {x === 994.5 && <Marker x={993.5} y={402} />}
          <circle cx={x} cy={y} r="3.9" fill="#fff" stroke="#000" strokeWidth="1.6" />
        </g>
      ))}
      <text x="10" y="811" textLength="56" fontSize="19.5" fontWeight="500" fill="#fff" fontFamily="Lato, sans-serif">Google</text>
    </svg>
  );
}

/* ---------- Browser chrome ---------- */

function ReactBadge() {
  return (
    <span className="flex size-4 items-center justify-center rounded-[2px] bg-[#20232a]">
      <FaReact size={14} color="#4fb9d3" />
    </span>
  );
}

function TranslateBadge() {
  return (
    <svg className="size-4" viewBox="0 0 16 16">
      <path d="M6 4h9a1 1 0 0 1 1 1v10a1 1 0 0 1-1 1H9z" fill="#d3d5d9" />
      <path d="M9.5 8h5M12 7v1M13.5 8c-.5 2-1.700 3.500-3.500 4.500M10.500 9.500c.7 1.400 1.800 2.400 3.200 3" stroke="#6f7b86" strokeWidth=".9" fill="none" />
      <path d="M8 13h3l-2 3z" fill="#4a2fd0" />
      <path d="M1 0h6.500L11 13H1a1 1 0 0 1-1-1V1a1 1 0 0 1 1-1z" fill="#5a73f5" />
      <text x="4.400" y="9" textAnchor="middle" fontSize="7.500" fontWeight="700" fill="#fff" fontFamily="Roboto, sans-serif">G</text>
    </svg>
  );
}

function GmailMark() {
  return (
    <svg className="h-3 w-4" viewBox="0 0 16 12">
      <path d="M0 1.500V11a1 1 0 0 0 1 1h2.600V5z" fill="#4285f4" />
      <path d="M16 1.500V11a1 1 0 0 1-1 1h-2.600V5z" fill="#34a853" />
      <path d="M12.400 1.200 16 .9v2l-3.600 2.700z" fill="#fbbc04" />
      <path d="M0 1.800C0 .2 1.700-.4 2.900.5L8 4.400 13.100.5v4.600L8 9 0 3.200z" fill="#ea2335" />
    </svg>
  );
}

const tabs: { title: string; icon: React.ReactNode; audio?: boolean }[] = [
  { title: "React App", icon: <ReactBadge /> },
  { title: "Oluwa Kuwait -", icon: <FaYoutube size={16} color="#f00" />, audio: true },
  { title: "Gmail : une messa", icon: <span className="flex size-4 items-center justify-center rounded-full bg-white"><FcGoogle size={13} /></span> },
  { title: "Settings", icon: <MdSettings size={16} color="#4350f0" /> },
  { title: "javascript - Load lo", icon: <FaStackOverflow size={15} color="#f48024" /> },
  { title: "KaraSery/vehicle-r", icon: <FaGithub size={16} color="#24292f" /> },
  { title: "Google Traduction", icon: <TranslateBadge /> },
  { title: "[GitHub] Please ve", icon: <GmailMark /> },
];

function TopBar() {
  return (
    <div className="flex h-[27px] items-center bg-[#1e1e1e] text-[14px] text-[#e4e4e4]">
      <span className="ml-3 w-[97px] pb-px tracking-[0.25px]">Activities</span>
      <svg className="size-4" viewBox="0 0 16 16">
        <circle cx="8" cy="8" r="8" fill="#777" />
        <path d="M8 0a8 8 0 0 1 7 12L8 8z" fill="#a5a5a5" />
        <circle cx="8" cy="8" r="4" fill="#d8d8d8" />
        <circle cx="8" cy="8" r="2.900" fill="#6c6c6c" />
      </svg>
      <span className="ml-1.5 w-[105px] whitespace-nowrap pb-px">Google Chrome</span>
      <span className="ml-1 h-0 w-0 border-x-[5px] border-t-[5px] border-x-transparent border-t-[#f0f0f0]" />
      <span className="ml-[651px] w-[843px] whitespace-pre pb-px">mar. 2 août  18:54</span>
      <svg className="-ml-[1px] h-4 w-4 shrink-0" viewBox="0 0 16 16">
        <path d="M7 0c2 1.200 3.500 1.500 6 1.700C13 8 12 12.500 7 15.500 2 12.500 1 8 1 1.700 3.500 1.500 5 1.200 7 0z" fill="#d0d0d0" />
        <circle cx="10" cy="11" r="4.200" fill="#2eb84b" />
        <path d="m8 11 1.500 1.500L12 9.800" stroke="#fff" fill="none" />
      </svg>
      <svg className="ml-7 h-3.5 w-4 shrink-0" viewBox="0 0 16 14">
        <path d="M.5 4C4.500 0 11.500 0 15.500 4L8 13.500z" fill="#f2f2f2" />
        <path d="M1.800 4.700c3.500-3 8.900-3 12.400 0" stroke="#333" fill="none" strokeWidth=".9" />
      </svg>
      <MdVolumeUp className="ml-3 shrink-0" size={17} color="#f2f2f2" />
      <svg className="ml-3 h-4 w-4 shrink-0" viewBox="0 0 16 16">
        <path d="M3.500 4 0 9h2l-1 4 3.500-5.500h-2z" fill="#f2f2f2" />
        <path d="M7 2.500h7v12H7z M9 1h3" fill="none" stroke="#f2f2f2" strokeWidth="1.500" />
        <path d="M8.500 11.500h4v2h-4z" fill="#f2f2f2" />
      </svg>
      <span className="ml-1 w-[29px] whitespace-nowrap pb-px text-[13px] tracking-[-0.6px]">24 %</span>
      <span className="ml-[3px] h-0 w-0 border-x-[5px] border-t-[5px] border-x-transparent border-t-[#f0f0f0]" />
    </div>
  );
}

function TabStrip() {
  return (
    <div className="flex h-[34px] border-t border-[#4a4a4a] bg-[#323031] pl-[8px] text-[14.500px] text-[#e6e6e6]">
      {tabs.map((tab, i) => (
        <div key={tab.title} className="flex h-[33px] w-[185.500px] shrink-0 items-center">
          <span className="ml-[13px] flex w-4 shrink-0 items-center justify-center">{tab.icon}</span>
          <span
            className={`ml-2 overflow-hidden whitespace-nowrap pb-[2px] [mask-image:linear-gradient(to_right,black_75%,transparent)] ${tab.audio ? "w-[96px]" : "w-[121px]"}`}
          >
            {tab.title}
          </span>
          {tab.audio && <MdVolumeUp className="ml-2.5" size={13} color="#fff" />}
          <MdClose className={tab.audio ? "ml-2" : "ml-1.5"} size={14} color="#f0f0f0" />
          {i < 7 && <span className="ml-auto h-5 w-px bg-[#666]" />}
        </div>
      ))}
      <div className="relative flex h-[33px] w-[186px] shrink-0 items-center rounded-t-[8px] bg-[#f7f7f7] text-[#45454a]">
        <span className="absolute -left-2 bottom-0 size-2 bg-[radial-gradient(circle_at_0_0,transparent_8px,#f7f7f7_8.500px)]" />
        <span className="absolute -right-2 bottom-0 size-2 bg-[radial-gradient(circle_at_100%_0,transparent_8px,#f7f7f7_8.500px)]" />
        <span className="ml-3"><ReactBadge /></span>
        <span className="ml-2 w-[124px] pb-[2px]">React App</span>
        <MdClose className="ml-[3px]" size={14} color="#444" />
      </div>
      <div className="flex flex-1 items-center text-[#f2f2f2]">
        <MdAdd className="ml-3" size={20} />
        <MdKeyboardArrowDown className="ml-[58px]" size={19} />
        <span className="ml-[26px] mt-2 h-[1.500px] w-2 bg-[#e8e8e8]" />
        <svg className="ml-[31px] size-2.5" viewBox="0 0 10 10" fill="none" stroke="#e8e8e8" strokeWidth="1.300">
          <path d="M1.500 3.500h5v5h-5z" />
          <path d="M3.500 1.200h5.200v5.300" strokeWidth=".8" />
        </svg>
        <span className="ml-[25px] flex size-5 items-center justify-center rounded-full bg-[#f23f0a]"><MdClose size={14} /></span>
      </div>
    </div>
  );
}

function Toolbar() {
  return (
    <div className="flex h-[38px] items-center bg-[#f7f7f7] text-[#454545]">
      <MdArrowBack className="ml-3" size={19} color="#a5a5a5" />
      <MdArrowForward className="ml-[13px]" size={19} color="#a5a5a5" />
      <MdRefresh className="ml-[13px]" size={20} color="#3a3a3a" />
      <div className="ml-3 flex h-[30px] w-[1608px] items-center rounded-full bg-white">
        <MdInfoOutline className="ml-2.5" size={16} color="#5f6368" />
        <span className="ml-2 pb-px text-[14px] tracking-[-0.1px] text-[#111]">localhost<span className="text-[#777]">:3000</span></span>
        <MdShare className="ml-auto" size={15} color="#555" />
        <MdStar className="ml-[15px] mr-[9px]" size={18} color="#e37400" />
      </div>
      <span className="ml-[14px]"><TranslateBadge /></span>
      <MdExtension className="ml-4" size={17} />
      <MdQueueMusic className="ml-[13px]" size={20} />
      <span className="ml-[15px] h-[13px] w-[14px] border-2 border-r-[5px] border-[#3c3c3c]" />
      <span className="ml-[14px] flex size-[22px] items-center justify-center rounded-full bg-[#ff6a00] pb-px text-[12px] text-white">n</span>
      <MdMoreVert className="ml-[12px]" size={19} />
    </div>
  );
}

function Bookmarks() {
  return (
    <div className="flex h-[33px] items-center border-b border-[#bdbdbd] bg-[#f7f7f7] pb-[5px] text-[14.500px] text-[#4b4b4b]">
      <span className="ml-[14px] flex size-4 items-center justify-center bg-[#2f45d5] text-[11px] leading-none font-bold tracking-[-0.500px] text-white">tm</span>
      <span className="ml-2 w-[109px] whitespace-nowrap tracking-[0.28px]">Live View Pag…</span>
      <MdFolder className="ml-[15px]" size={17} color="#3c3c3c" />
      <span className="ml-[7px] w-[77px] whitespace-nowrap">New folder</span>
      <svg className="ml-[15px] size-4" viewBox="0 0 16 16">
        <path d="M0 12c3-3 5-5 6-9l6 9c-4 3-8 3-12 0z" fill="#d9d9d9" />
        <path d="M9 2c4-1 6 2 6 5 0 4-3 6-5 8-2-2-6-4-6-8 0-3 2-5 5-5z" fill="#0b4a66" />
        <path d="m8 7 5 4-2 3z" fill="#25d3c8" />
      </svg>
      <span className="ml-2 whitespace-nowrap tracking-[0.35px]">Sur-Ron Light…</span>
      <span className="ml-auto h-4 w-px bg-[#c4c4c4]" />
      <MdFolder className="ml-[10px]" size={17} color="#3c3c3c" />
      <span className="ml-2 mr-2.5 w-[121px] whitespace-nowrap">Other bookmarks</span>
    </div>
  );
}

/* ---------- Page ---------- */

const jobs: [string[], string, string][] = [
  [["51 Chemin des Mouilles, 69130", "Ecully"], "1:30 PM", "2:00 PM"],
  [["40 Av Guy de Collongue, 69130", "Ecully"], "1:00 PM", "1:30 PM"],
  [["25 Rte de Paris, 69260", "Charbonnieres-les-Bains"], "1:00 PM", "1:30 PM"],
  [["18 Av du Dr Terver, 69130 Ecully"], "9:00 AM", "9:30 AM"],
  [["9 Chemin. de la Pomme, 69160", "Tassin-la-Demi-Lune"], "1:30 PM", "2:00 PM"],
  [["15 Av de la Constellation, 69160", "Tassin-la-Demi-Lune"], "10:30 AM", "11:00 AM"],
  [["68 Rue Joliot Curie, 69005 Lyon"], "11:30 AM", "0:00 PM"],
  [["173 Av Barthelemy Buyer, 69005", "Lyon"], "1:15 PM", "1:45 PM"],
  [["50 Av Sidoine Apollinaire, 69009", "Lyon"], "1:30 PM", "2:00 PM"],
  [["2 Rue de la Fraternelle, 69009", "Lyon"], "10:30 AM", "11:00 AM"],
  [["55 Av Rene Cassin, 69009 Lyon"], "9:30 AM", "10:00 AM"],
  [["25 Rue de la Claire, 69009 Lyon"], "9:30 AM", "10:00 AM"],
  [["23 Rue Emile Duport, 69009 Lyon"], "0:15 PM", "0:45 PM"],
];

function Sidebar() {
  return (
    <aside className="ml-4 w-[244px]">
      <nav className="flex h-12 items-start pl-1 pt-[19.500px] text-[16px] leading-6 text-[#333]">
        <span className="w-[39px] tracking-[-0.2px]">jobs</span>
        <span className="w-[62px] tracking-[0.2px]">addJob</span>
        <span className="tracking-[0.2px]">fleet</span>
      </nav>
      <div className="h-[3px] bg-[#c8c8c8]">
        <div className="h-[2px] w-[38px] bg-black" />
      </div>
      <h2 className="mt-4 h-6 text-[15.500px] leading-6 font-bold tracking-[-0.1px] text-[#2b2b2b]">Livraisons</h2>
      <div className="mt-1 h-px w-[232px] bg-[#aaa]" />
      <ul className="mt-[16.400px] flex w-[232px] flex-col gap-[13.400px] pl-[12.500px] text-[13.500px] leading-[18.400px] font-bold tracking-[-0.14px] whitespace-nowrap text-[#4b4b4b]">
        {jobs.map(([lines, from, to]) => (
          <li key={lines[0]}>
            {lines.map((l) => <div key={l}>{l}</div>)}
            <div>{from} <span className="font-normal">&gt;</span> {to}</div>
          </li>
        ))}
      </ul>
    </aside>
  );
}

export default function App() {
  return (
    <div className="flex h-[1080px] w-[1920px] flex-col overflow-hidden bg-[#f5f5f5] [font-family:'Noto_Sans','Open_Sans',sans-serif]">
      <TopBar />
      <TabStrip />
      <Toolbar />
      <Bookmarks />
      <div className="flex min-h-0 flex-1">
        <main className="w-[1905px]">
          <header className="flex h-9 items-start text-[16px] text-[#333]">
            <span className="w-[890px] leading-[17px] tracking-[-0.500px]">LOGO</span>
            <nav className="flex h-9 w-[93px] flex-col">
              <div className="flex h-[32px] items-center pl-1">
                <span className="w-[47px] tracking-[-0.400px]">maps</span>
                <span className="tracking-[-0.200px]">table</span>
              </div>
              <div className="mt-px h-[3px] border-l border-black bg-[#c8c8c8]" />
            </nav>
            <button className="ml-auto h-9 w-[75px] rounded-[4px] border border-[#858585] bg-white text-[16px] tracking-[-0.3px] text-[#111]">Menu</button>
          </header>
          <div className="flex">
            <div className="relative h-[650px] w-[1629px] overflow-hidden">
              <MapCanvas />
              <div className="absolute right-0 bottom-0 flex h-[14px] items-center divide-x divide-[#111] bg-[#b4b4b4] text-[10.200px] leading-[14px] whitespace-nowrap text-black [font-family:Roboto,sans-serif]">
                <span className="w-[97px] pl-[5px]">Keyboard shortcuts</span>
                <span className="w-[124px] pl-[5px] text-[9.800px] text-[#444] [font-family:'Noto_Sans',sans-serif]">Map Data ©2022 Google</span>
                <span className="w-[71px] pl-[5px] text-[9.800px] [font-family:'Noto_Sans',sans-serif]">Terms of Use</span>
                <span className="w-[95px] pl-[5px]">Report a map error</span>
              </div>
            </div>
            <Sidebar />
          </div>
        </main>
        <div className="flex w-[15px] flex-col items-center bg-[#f1f1f1]">
          <span className="mt-1.5 h-0 w-0 border-x-4 border-b-4 border-x-transparent border-b-[#a3a3a3]" />
          <span className="mt-[5px] h-[425px] w-[11px] bg-[#c1c1c1]" />
          <span className="mt-auto mb-1.5 h-0 w-0 border-x-4 border-t-4 border-x-transparent border-t-[#505050]" />
        </div>
      </div>
    </div>
  );
}
